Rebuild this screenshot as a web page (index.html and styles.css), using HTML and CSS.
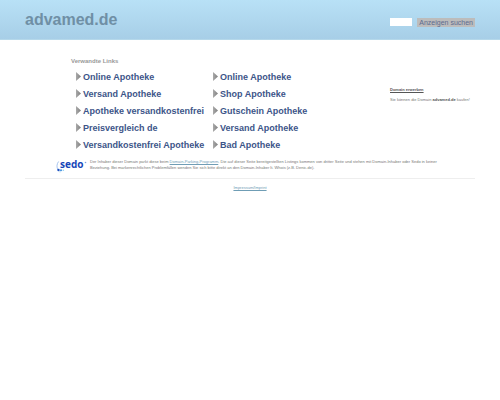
FILE: index.html
```html
<!DOCTYPE html>
<html lang="de">
<head>
<meta charset="utf-8">
<title>advamed.de</title>
<link rel="stylesheet" href="styles.css">
</head>
<body>
<header class="top">
  <h1 class="title">advamed.de</h1>
  <form class="search">
    <input class="field" type="text" aria-label="Suchbegriff">
    <button class="submit" type="button">Anzeigen suchen</button>
  </form>
</header>
<main class="main">
  <section class="related">
    <h2 class="heading">Verwandte Links</h2>
    <div class="columns">
      <ul class="links">
        <li><a href="#">Online Apotheke</a></li>
        <li><a href="#">Versand Apotheke</a></li>
        <li><a href="#">Apotheke versandkostenfrei</a></li>
        <li><a href="#">Preisvergleich de</a></li>
        <li><a href="#">Versandkostenfrei Apotheke</a></li>
      </ul>
      <ul class="links">
        <li><a href="#">Online Apotheke</a></li>
        <li><a href="#">Shop Apotheke</a></li>
        <li><a href="#">Gutschein Apotheke</a></li>
        <li><a href="#">Versand Apotheke</a></li>
        <li><a href="#">Bad Apotheke</a></li>
      </ul>
    </div>
  </section>
  <aside class="buy">
    <a class="buy-link" href="#">Domain erwerben</a>
    <p class="buy-text">Sie können die Domain <b>advamed.de</b> kaufen!</p>
  </aside>
</main>
<footer class="footer">
  <div class="notice">
    <svg class="logo" viewBox="0 0 32 14" role="img" aria-label="sedo">
      <path d="M2.6 2.5C.6 5 .5 8.500 2 11" fill="none" stroke="#8fb4ea" stroke-width=".8"/>
      <circle cx="2.500" cy="11" r="1.200" fill="#1c50c0"/>
      <circle cx="5" cy="11.300" r="1" fill="#3f8ede"/>
      <circle cx="7.300" cy="11.300" r=".8" fill="#8fd0f4"/>
      <circle cx="4" cy="12.800" r=".6" fill="#8fd0f4"/>
      <text class="logo-text" x="4" y="9">sedo</text>
      <circle cx="29.500" cy="3.500" r=".8" fill="#7d9fe0"/>
    </svg>
    <p class="legal">Der Inhaber dieser Domain parkt diese beim <a href="#">Domain-Parking-Programm</a>. Die auf dieser Seite bereitgestellten Listings kommen von dritter Seite und stehen mit Domain-Inhaber oder Sedo in keiner<br>Beziehung. Bei markenrechtlichen Problemfällen wenden Sie sich bitte direkt an den Domain-Inhaber lt. Whois (z.B. Denic.de).</p>
  </div>
  <a class="imprint" href="#">Impressum/Imprint</a>
</footer>
</body>
</html>
```
FILE: styles.css
```css
* { box-sizing: border-box; }
body { margin: 0; background: #fff; font-family: "Liberation Sans", Arial, sans-serif; color: #777; }
h1, h2, p, ul { margin: 0; padding: 0; }

.top {
  display: flex;
  justify-content: space-between;
  align-items: center;
  height: 40px;
  padding: 0 25px;
  background: linear-gradient(#b8e1f6, #a7cee7);
  border-bottom: 1px solid #b5d8ea;
}
.title { font-size: 16px; line-height: 20px; color: #6f8fa5; }
.search { display: flex; align-items: center; gap: 5px; padding-top: 5px; }
.field { width: 22px; height: 8px; padding: 0; border: 0; background: #fff; font-size: 6px; }
.submit {
  height: 9px;
  padding: 0 2px;
  border: 0;
  background: #bcbcbc;
  color: #5d6b90;
  font: 7px/9px "Liberation Sans", Arial, sans-serif;
}

.main { display: flex; justify-content: space-between; padding: 17px 25px 0 71px; }
.heading { font-size: 6px; line-height: 8px; color: #999; }
.columns { display: flex; margin: 3px 0 0 5px; }
.links { width: 137px; list-style: none; }
.links li { display: flex; align-items: center; gap: 2px; height: 17px; white-space: nowrap; }
.links li::before {
  content: "";
  width: 5px;
  height: 9px;
  background: linear-gradient(90deg, #aaa, #808080);
  clip-path: polygon(0 0, 100% 50%, 0 100%);
}
.links a { font-size: 9px; font-weight: bold; line-height: 12px; color: #3d5589; text-decoration: none; }

.buy { padding-top: 30px; width: 85px; white-space: nowrap; font-size: 4px; line-height: 6px; }
.buy-link { display: block; color: #555; font-weight: bold; }
.buy-text { margin-top: 4px; }
.buy-text b { color: #555; }

.footer { margin: 0 25px; text-align: center; }
.notice {
  display: flex;
  gap: 2px;
  padding: 6px 0 5px 31px;
  border-bottom: 1px solid #eee;
  text-align: left;
}
.logo { flex: none; width: 32px; height: 14px; }
.logo-text { font: bold 10px "Open Sans", sans-serif; fill: #1646b8; }
.legal { font-size: 4px; line-height: 6px; white-space: nowrap; }
.legal a, .imprint { color: #6f9db5; }
.imprint { display: block; margin-top: 6px; font-size: 4px; line-height: 6px; }
```
